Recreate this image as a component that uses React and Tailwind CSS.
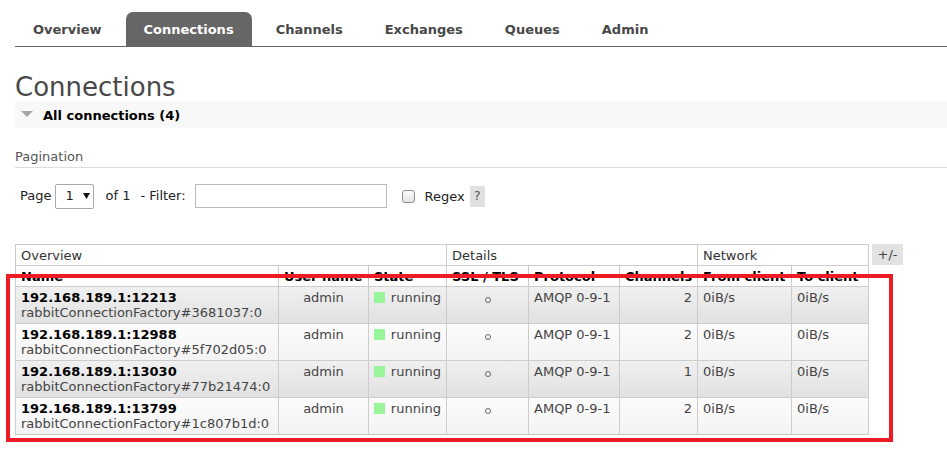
import React from "react";

const tabs = ["Overview", "Connections", "Channels", "Exchanges", "Queues", "Admin"];

const rows = [
  { name: "192.168.189.1:12213", sub: "rabbitConnectionFactory#3681037:0", ch: 2 },
  { name: "192.168.189.1:12988", sub: "rabbitConnectionFactory#5f702d05:0", ch: 2 },
  { name: "192.168.189.1:13030", sub: "rabbitConnectionFactory#77b21474:0", ch: 1 },
  { name: "192.168.189.1:13799", sub: "rabbitConnectionFactory#1c807b1d:0", ch: 2 },
];

export default function App() {
  return (
    <div className="relative min-h-screen bg-white font-['DejaVu_Sans',Verdana,sans-serif] text-[13px] text-[#444]">
      <div className="pl-[15px]">
        <nav className="flex items-end gap-[6px] border-b border-[#666] pt-[12px]">
          {tabs.map((t) => (
            <div
              key={t}
              className={
                t === "Connections"
                  ? "flex h-[34px] items-center rounded-t-[7px] bg-[#666] px-[18px] pt-[2px] font-bold text-white"
                  : "flex h-[34px] items-center rounded-t-[7px] px-[18px] pt-[2px] font-bold text-[#484848]"
              }
            >
              {t}
            </div>
          ))}
        </nav>

        <h1 className="mt-[25px] text-[26px] font-normal leading-[30px] text-[#484848]">Connections</h1>

        <div className="flex h-[26px] items-center bg-[#f8f8f8] pt-[2px]">
          <svg width="12" height="7" viewBox="0 0 12 7" className="ml-[6px] mt-[-3px]">
            <polygon points="0,0 12,0 6,6" fill="#a6a6a6" />
          </svg>
          <span className="ml-[10px] font-bold text-black">All connections (4)</span>
        </div>

        <div className="mt-[20px] border-b border-[#ddd] pb-[2px] pt-[1px] leading-[16px] text-[#555]">Pagination</div>

        <div className="mt-[15px] flex h-[25px] items-center pl-[5px] pt-[1px] text-[#222]">
          <span>Page</span>
          <div className="ml-[4px] flex h-[25px] w-[39px] items-center rounded-[2px] border border-[#a9a9a9] bg-white">
            <span className="ml-[9px]">1</span>
            <svg width="7" height="6" viewBox="0 0 7 6" className="ml-[9px]">
              <polygon points="0,0 7,0 3.5,6" fill="#111" />
            </svg>
          </div>
          <span className="ml-[11px]">of 1</span>
          <span className="ml-[10px]">- Filter:</span>
          <div className="ml-[9px] h-[24px] w-[192px] border border-[#bbb] bg-white" />
          <div className="ml-[15px] h-[13px] w-[13px] rounded-[3px] border border-[#8f8f8f] bg-gradient-to-b from-[#fdfdfd] to-[#e4e4e4]" />
          <span className="ml-[10px] mt-[2px]">Regex</span>
          <span className="ml-[5px] flex h-[21px] w-[15px] items-center justify-center bg-[#e0e0e0] text-[#555]">?</span>
        </div>

        <div className="mt-[36px] flex items-start">
          <table className="w-[853px] table-fixed border-collapse">
            <colgroup>
              <col className="w-[263px]" />
              <col className="w-[90px]" />
              <col className="w-[78px]" />
              <col className="w-[82px]" />
              <col className="w-[91px]" />
              <col className="w-[78px]" />
              <col className="w-[94px]" />
              <col className="w-[77px]" />
            </colgroup>
            <thead>
              <tr className="bg-white">
                <th colSpan={3} className="border border-[#ccc] px-[5px] pb-[1px] pt-[3px] text-left font-normal leading-[16px] text-[#333]">Overview</th>
                <th colSpan={3} className="border border-[#ccc] px-[5px] pb-[1px] pt-[3px] text-left font-normal leading-[16px] text-[#333]">Details</th>
                <th colSpan={2} className="border border-[#ccc] px-[5px] pb-[1px] pt-[3px] text-left font-normal leading-[16px] text-[#333]">Network</th>
              </tr>
              <tr className="bg-white">
                {["Name", "User name", "State", "SSL / TLS", "Protocol", "Channels", "From client", "To client"].map((h) => (
                  <th key={h} className="whitespace-nowrap border border-[#ccc] px-[5px] pb-[1px] pt-[3px] text-left font-bold leading-[16px] text-black">
                    {h}
                  </th>
                ))}
              </tr>
            </thead>
            <tbody>
              {rows.map((r, i) => (
                <tr
                  key={r.name}
                  className={
                    i % 2 === 0
                      ? "bg-gradient-to-b from-[#f0f0f0] to-[#e1e1e1]"
                      : "bg-gradient-to-b from-[#fcfcfc] to-[#f3f3f3]"
                  }
                >
                  <td className="whitespace-nowrap border border-[#ccc] px-[5px] py-[3px] align-top leading-[15px]">
                    <div className="font-bold text-black">{r.name}</div>
                    <div>{r.sub}</div>
                  </td>
                  <td className="border border-[#ccc] px-[5px] py-[3px] text-center align-top leading-[15px]">admin</td>
                  <td className="border border-[#ccc] px-[5px] py-[3px] align-top leading-[15px]">
                    <div className="flex items-center">
                      <span className="inline-block h-[11px] w-[11px] bg-[#99f599]" />
                      <span className="ml-[6px]">running</span>
                    </div>
                  </td>
                  <td className="border border-[#ccc] px-[5px] py-[3px] align-top leading-[15px]">
                    <div className="mx-auto mt-[7px] h-[6px] w-[6px] rounded-full border border-[#666]" />
                  </td>
                  <td className="whitespace-nowrap border border-[#ccc] px-[5px] py-[3px] align-top leading-[15px]">AMQP 0-9-1</td>
                  <td className="border border-[#ccc] px-[5px] py-[3px] text-right align-top leading-[15px]">{r.ch}</td>
                  <td className="border border-[#ccc] px-[5px] py-[3px] align-top leading-[15px]">0iB/s</td>
                  <td className="border border-[#ccc] px-[5px] py-[3px] align-top leading-[15px]">0iB/s</td>
                </tr>
              ))}
            </tbody>
          </table>
          <div className="ml-[3px] flex h-[21px] w-[31px] items-center justify-center bg-[#e2e2e2] text-[#444]">+/-</div>
        </div>
      </div>

      <div className="pointer-events-none absolute left-[6px] top-[274px] h-[168px] w-[887px] border-[4px] border-[#ed1c24]" />
    </div>
  );
}
